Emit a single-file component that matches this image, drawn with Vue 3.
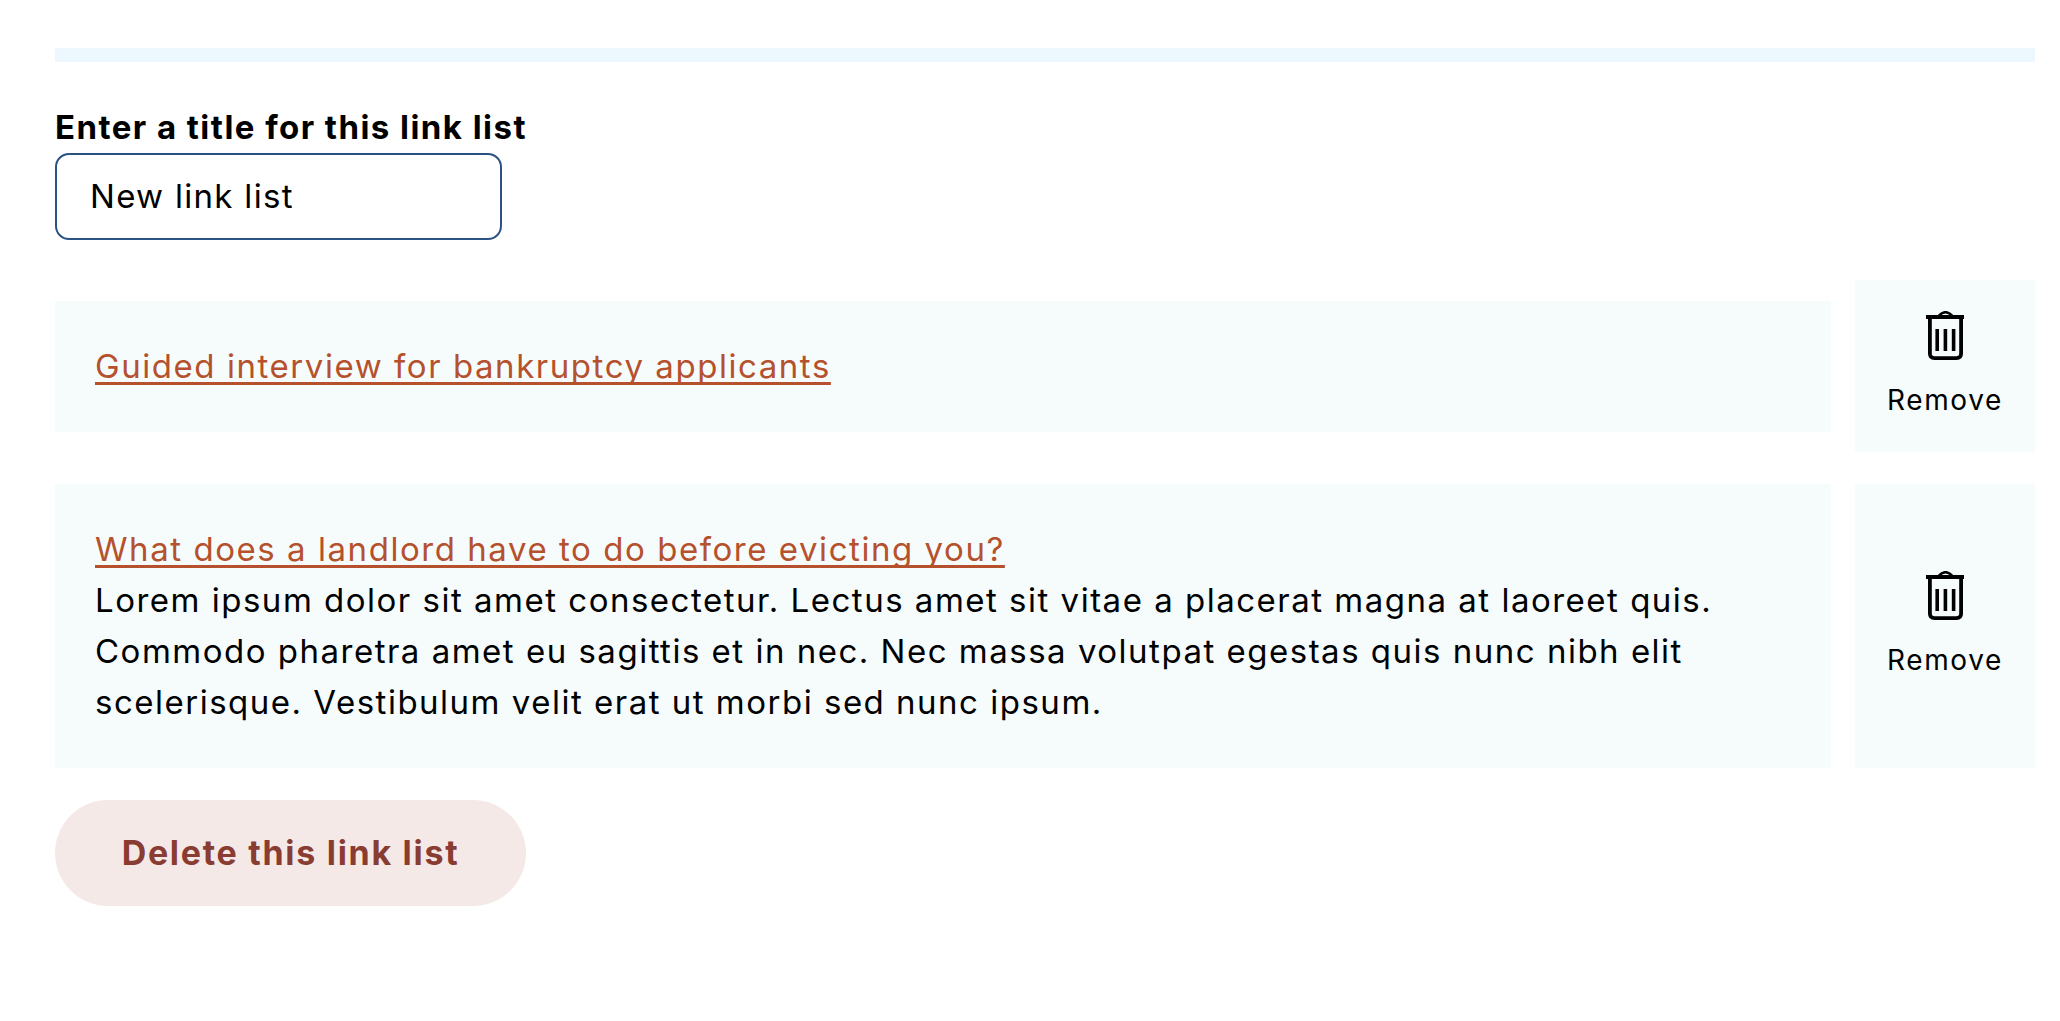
<script setup>
const items = [
  { title: 'Guided interview for bankruptcy applicants', body: '' },
  {
    title: 'What does a landlord have to do before evicting you?',
    body: 'Lorem ipsum dolor sit amet consectetur. Lectus amet sit vitae a placerat magna at laoreet quis. Commodo pharetra amet eu sagittis et in nec. Nec massa volutpat egestas quis nunc nibh elit scelerisque. Vestibulum velit erat ut morbi sed nunc ipsum.'
  }
]
</script>

<template>
  <div class="page">
    <div class="band"></div>
    <label class="label" for="title">Enter a title for this link list</label>
    <input id="title" class="input" type="text" value="New link list" />
    <div class="list">
      <div v-for="item in items" :key="item.title" class="row">
        <div class="card">
          <a class="link" href="#">{{ item.title }}</a>
          <p v-if="item.body" class="body">{{ item.body }}</p>
        </div>
        <button class="remove" type="button">
          <svg class="trash" viewBox="0 0 38 49" width="38" height="49" aria-hidden="true">
            <path d="M13 4.5C15 2.5 17 1.2 19.5 1.2C22 1.2 24 2.5 26 4.5" fill="none" stroke="#000" stroke-width="2.6" />
            <rect x="0" y="4" width="38" height="4" fill="#000" />
            <path d="M3.9 7V42.5C3.9 45.5 5.6 47.1 8.6 47.1H30.4C33.4 47.1 35.1 45.5 35.1 42.5V7" fill="none" stroke="#000" stroke-width="3.8" />
            <rect x="9.4" y="18" width="3.6" height="22" fill="#000" />
            <rect x="17.6" y="18" width="3.6" height="22" fill="#000" />
            <rect x="25.8" y="18" width="3.6" height="22" fill="#000" />
          </svg>
          <span class="remove-text">Remove</span>
        </button>
      </div>
    </div>
    <button class="delete" type="button">Delete this link list</button>
  </div>
</template>

<style>
html, body { margin: 0; background: #fff; }
</style>

<style scoped>
.page {
  box-sizing: border-box;
  width: 2060px;
  height: 1021px;
  padding: 48px 25px 0 55px;
  font-family: Inter, "Liberation Sans", sans-serif;
  color: #000;
  overflow: hidden;
}
.band {
  height: 14px;
  background: #ecf8fe;
}
.label {
  display: block;
  margin-top: 43px;
  font-size: 33px;
  line-height: 44px;
  font-weight: 700;
  letter-spacing: 1.45px;
}
.input {
  display: block;
  box-sizing: border-box;
  width: 447px;
  height: 87px;
  margin-top: 4px;
  padding: 0 33px 2px;
  border: 2px solid #2a5384;
  border-radius: 14px;
  outline: none;
  background: #fff;
  font: 400 33px Inter, "Liberation Sans", sans-serif;
  letter-spacing: 1.3px;
  color: #000;
}
.list {
  display: flex;
  flex-direction: column;
  gap: 32px;
  margin-top: 40px;
}
.row {
  display: flex;
  gap: 24px;
}
.card {
  box-sizing: border-box;
  flex: 1;
  align-self: center;
  padding: 40px;
  background: #f6fcfc;
  font-size: 33px;
  line-height: 51px;
  letter-spacing: 1.5px;
}
.link {
  color: #b5512d;
  letter-spacing: 1.55px;
  text-decoration: underline;
  text-decoration-thickness: 3px;
  text-decoration-skip-ink: none;
  text-underline-offset: 4px;
}
.body {
  margin: 0;
}
.remove {
  box-sizing: border-box;
  display: flex;
  flex-direction: column;
  align-items: center;
  justify-content: center;
  gap: 23px;
  width: 180px;
  min-height: 172px;
  padding: 0 0 5px;
  border: 0;
  background: #f6fcfc;
  color: #000;
  font-family: inherit;
}
.trash {
  display: block;
}
.remove-text {
  font-size: 28px;
  line-height: 34px;
  letter-spacing: 1.65px;
}
.delete {
  display: block;
  box-sizing: border-box;
  width: 471px;
  height: 106px;
  margin-top: 32px;
  padding: 0 0 2px;
  border: 0;
  border-radius: 53px;
  background: #f5e9e8;
  color: #893d32;
  font: 700 34px Inter, "Liberation Sans", sans-serif;
  letter-spacing: 1.7px;
}
</style>
